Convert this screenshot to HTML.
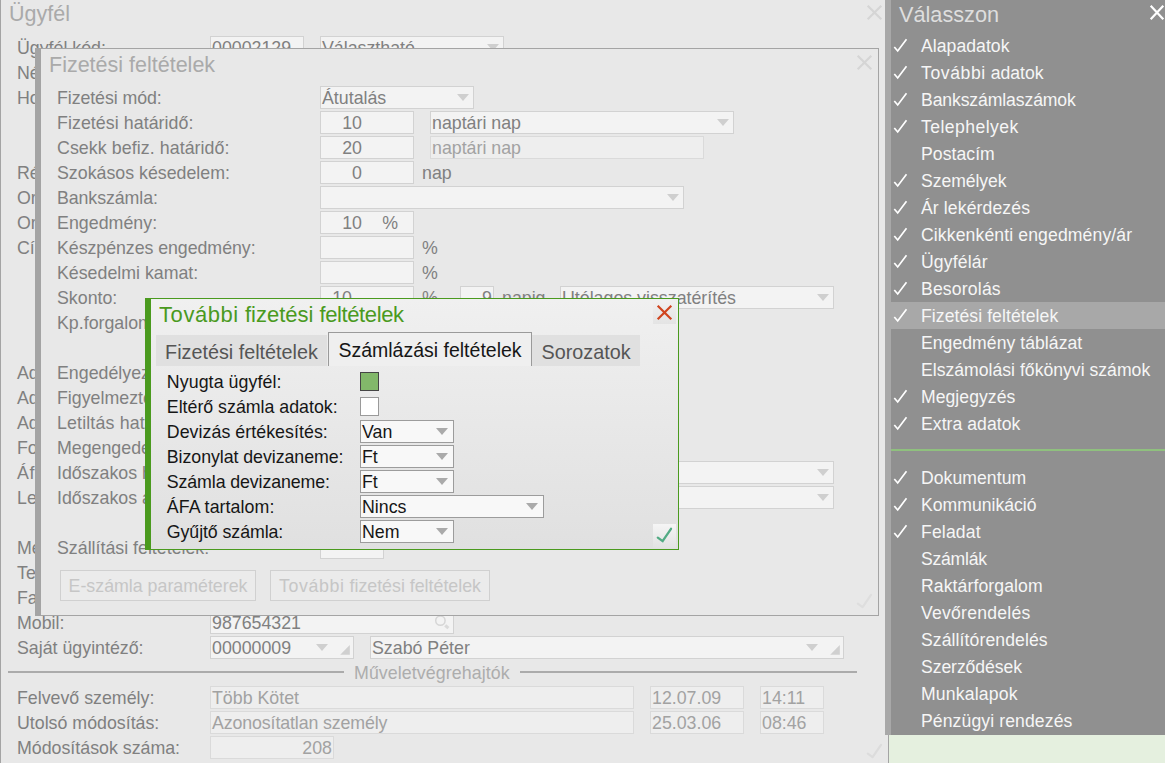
<!DOCTYPE html>
<html lang="hu"><head><meta charset="utf-8"><title>Ügyfél</title>
<style>
*{box-sizing:border-box;margin:0;padding:0}
html,body{width:1165px;height:763px;overflow:hidden}
body{position:relative;background:#e5f0df;font-family:"Liberation Sans",sans-serif;font-size:17.8px;line-height:23px;color:#808080}
.a{position:absolute;white-space:nowrap}
.l{position:absolute;white-space:nowrap;height:25px;line-height:25px}
.f{position:absolute;white-space:nowrap;height:23px;line-height:23px;border:1px solid #d2d2d2;background:#f3f3f3;padding-left:1px;overflow:hidden}
.r{background:#eeeeee;border-color:#dadada;color:#a2a2a2}
.c{padding-left:0}
.n{display:inline-block;width:41px;text-align:right}
.u{display:inline-block;width:36px;text-align:right}
.rt{text-align:right;padding-right:1px}
.ar{position:absolute;width:0;height:0;border-left:6px solid transparent;border-right:6px solid transparent;border-top:7px solid #cfcfcf}
.tri{position:absolute;width:9.6px;height:9.6px;background:#d0d0d0;clip-path:polygon(100% 0,100% 100%,0 100%)}
svg{position:absolute;overflow:visible}
#main{position:absolute;left:0;top:0;width:889px;height:763px;background:#e8e8e8;border-left:1px solid #a4a4a4;border-right:1px solid #a4a4a4;overflow:hidden}
#fiz{position:absolute;left:35px;top:48px;width:844px;height:568px;background:#e8e8e8;border:1px solid #a4a4a4;border-left:6px solid #a4a4a4;overflow:hidden}
#top{position:absolute;left:145px;top:298px;width:534px;height:252px;border:1px solid #4a9a1e;border-left:6px solid #4a9a1e;background:linear-gradient(#f0f0f0,#e0e0e0);color:#161616;overflow:hidden}
#top .f{background:#f8f8f8;border-color:#9c9c9c;color:#161616}
#top .ar{border-top-color:#aaaaaa}
#side{position:absolute;left:885px;top:0;width:280px;height:735px;background:#909090;border-left:6px solid #a8a8a8;color:#f6f6f6;overflow:hidden}
.btn{position:absolute;height:31px;line-height:31px;border:1px solid #d0d0d0;background:#ebebeb;color:#c6c6c6;text-align:center;font-size:17.8px;white-space:nowrap}
.tab{position:absolute;font-size:19.8px;white-space:nowrap;text-align:center}
.si{position:absolute;left:30px;height:27px;line-height:27px;white-space:nowrap;font-size:17.6px}
</style></head><body>
<div id="main">
<div class="a" style="left:8px;top:0px;font-size:21.5px;line-height:28px;color:#aaaaaa">Ügyfél</div>
<svg style="left:866px;top:5px" width="15" height="15" viewBox="0 0 15 15"><path d="M0.7 0.7L14.3 14.3M14.3 0.7L0.7 14.3" stroke="#d5d5d5" stroke-width="2.2" fill="none"/></svg>
<div class="l" style="left:16px;top:36px;">Ügyfél kód:</div>
<div class="l" style="left:16px;top:61px;">Név:</div>
<div class="l" style="left:16px;top:86px;">Hosszú név:</div>
<div class="l" style="left:16px;top:161px;">Régió:</div>
<div class="l" style="left:16px;top:186px;">Ország:</div>
<div class="l" style="left:16px;top:211px;">Országkód:</div>
<div class="l" style="left:16px;top:236px;">Cím:</div>
<div class="l" style="left:16px;top:361px;">Adószám:</div>
<div class="l" style="left:16px;top:386px;">Adószám EU:</div>
<div class="l" style="left:16px;top:411px;">Adóazonosító:</div>
<div class="l" style="left:16px;top:436px;">Forgalmazó:</div>
<div class="l" style="left:16px;top:461px;letter-spacing:0.6px">Áfa körzet:</div>
<div class="l" style="left:16px;top:486px;">Levelezés:</div>
<div class="l" style="left:16px;top:536px;">Megjegyzés:</div>
<div class="l" style="left:16px;top:561px;">Telefon:</div>
<div class="l" style="left:16px;top:586px;">Fax:</div>
<div class="l" style="left:16px;top:611px;">Mobil:</div>
<div class="l" style="left:16px;top:636px;">Saját ügyintéző:</div>
<div class="l" style="left:16px;top:686px;">Felvevő személy:</div>
<div class="l" style="left:16px;top:711px;">Utolsó módosítás:</div>
<div class="l" style="left:16px;top:736px;">Módosítások száma:</div>
<div class="f " style="left:209px;top:36px;width:94px;">00002129</div>
<div class="f " style="left:319px;top:36px;width:184px;">Választható</div>
<div class="ar" style="left:485.5px;top:44px;"></div>
<div class="f " style="left:209px;top:611px;width:244px;">987654321</div>
<svg style="left:429px;top:610px" width="24" height="24" viewBox="430 610 24 24"><circle cx="440.4" cy="620.6" r="4.7" stroke="#d6d6d6" stroke-width="1.5" fill="none"/><path d="M445.2 625.4L448.4 628.1" stroke="#dadada" stroke-width="3.2" fill="none"/></svg>
<div class="f " style="left:209px;top:636px;width:144px;">00000009</div>
<div class="ar" style="left:314.5px;top:644px;"></div>
<div class="tri" style="left:339.2px;top:645.1px"></div>
<div class="f " style="left:369px;top:636px;width:474px;">Szabó Péter</div>
<div class="ar" style="left:804.5px;top:644px;"></div>
<div class="tri" style="left:829.2px;top:645.1px"></div>
<div class="a" style="left:7px;top:671px;width:336px;height:2px;background:#ababab"></div>
<div class="a" style="left:519px;top:671px;width:337px;height:2px;background:#ababab"></div>
<div class="l" style="left:353px;top:661px;color:#adadad;letter-spacing:0.08px">Műveletvégrehajtók</div>
<div class="f r" style="left:209px;top:686px;width:424px;">Több Kötet</div>
<div class="f r" style="left:649px;top:686px;width:94px;">12.07.09</div>
<div class="f r" style="left:759px;top:686px;width:64px;">14:11</div>
<div class="f r" style="left:209px;top:711px;width:424px;letter-spacing:-0.12px">Azonosítatlan személy</div>
<div class="f r" style="left:649px;top:711px;width:94px;">25.03.06</div>
<div class="f r" style="left:759px;top:711px;width:64px;">08:46</div>
<div class="f r rt" style="left:209px;top:736px;width:124px;">208</div>
<svg style="left:866px;top:744px" width="15" height="15" viewBox="0 0 15 15"><path d="M0.8 9.6L5.6 13.2L14 0.8" stroke="#dcdcdc" stroke-width="2.2" stroke-linecap="round" stroke-linejoin="round" fill="none"/></svg>
</div>
<div id="fiz">
<div class="a" style="left:8px;top:1px;font-size:21.5px;line-height:30px;color:#aaaaaa">Fizetési feltételek</div>
<svg style="left:816px;top:6px" width="15" height="15" viewBox="0 0 15 15"><path d="M0.7 0.7L14.3 14.3M14.3 0.7L0.7 14.3" stroke="#d5d5d5" stroke-width="2.2" fill="none"/></svg>
<div class="l" style="left:16px;top:37px;letter-spacing:-0.083px">Fizetési mód:</div>
<div class="l" style="left:16px;top:62px;letter-spacing:0.059px">Fizetési határidő:</div>
<div class="l" style="left:16px;top:87px;letter-spacing:0.071px">Csekk befiz. határidő:</div>
<div class="l" style="left:16px;top:112px;letter-spacing:0.0px">Szokásos késedelem:</div>
<div class="l" style="left:16px;top:137px;letter-spacing:-0.09px">Bankszámla:</div>
<div class="l" style="left:16px;top:162px;letter-spacing:0.033px">Engedmény:</div>
<div class="l" style="left:16px;top:187px;letter-spacing:-0.055px">Készpénzes engedmény:</div>
<div class="l" style="left:16px;top:212px;letter-spacing:-0.007px">Késedelmi kamat:</div>
<div class="l" style="left:16px;top:237px;">Skonto:</div>
<div class="l" style="left:16px;top:262px;">Kp.forgalom limit:</div>
<div class="l" style="left:16px;top:312px;">Engedélyezett hitelkeret:</div>
<div class="l" style="left:16px;top:337px;">Figyelmeztetés hitelkeretnél:</div>
<div class="l" style="left:16px;top:362px;letter-spacing:0.15px">Letiltás határ:</div>
<div class="l" style="left:16px;top:387px;">Megengedett késedelem:</div>
<div class="l" style="left:16px;top:412px;">Időszakos hitelkeret:</div>
<div class="l" style="left:16px;top:437px;">Időszakos alap:</div>
<div class="l" style="left:16px;top:487px;">Szállítási feltételek:</div>
<div class="f " style="left:279px;top:37px;width:154px;">Átutalás</div>
<div class="ar" style="left:415.5px;top:45px;"></div>
<div class="f c" style="left:279px;top:62px;width:94px;"><span class="n">10</span></div>
<div class="f " style="left:389px;top:62px;width:304px;">naptári nap</div>
<div class="ar" style="left:675.5px;top:70px;"></div>
<div class="f c" style="left:279px;top:87px;width:94px;"><span class="n">20</span></div>
<div class="f r" style="left:389px;top:87px;width:274px;">naptári nap</div>
<div class="f c" style="left:279px;top:112px;width:94px;"><span class="n">0</span></div>
<div class="l" style="left:381px;top:112px;">nap</div>
<div class="f " style="left:279px;top:137px;width:364px;"></div>
<div class="ar" style="left:625.5px;top:145px;"></div>
<div class="f c" style="left:279px;top:162px;width:94px;"><span class="n">10</span><span class="u">%</span></div>
<div class="f " style="left:279px;top:187px;width:94px;"></div>
<div class="l" style="left:381px;top:187px;">%</div>
<div class="f " style="left:279px;top:212px;width:94px;"></div>
<div class="l" style="left:381px;top:212px;">%</div>
<div class="f c" style="left:279px;top:237px;width:94px;"><span class="n" style="width:31px">10</span></div>
<div class="l" style="left:381px;top:237px;">%</div>
<div class="f rt" style="left:419px;top:237px;width:34px;">9</div>
<div class="l" style="left:461px;top:237px;">napig</div>
<div class="f " style="left:519px;top:237px;width:274px;">Utólagos visszatérítés</div>
<div class="ar" style="left:775.5px;top:245px;"></div>
<div class="f " style="left:279px;top:262px;width:94px;"></div>
<div class="f " style="left:279px;top:312px;width:94px;"></div>
<div class="f " style="left:279px;top:337px;width:94px;"></div>
<div class="f " style="left:279px;top:362px;width:94px;"></div>
<div class="f " style="left:279px;top:387px;width:94px;"></div>
<div class="f " style="left:279px;top:412px;width:514px;"></div>
<div class="ar" style="left:775.5px;top:420px;"></div>
<div class="f " style="left:279px;top:437px;width:514px;"></div>
<div class="ar" style="left:775.5px;top:445px;"></div>
<div class="f " style="left:279px;top:487px;width:64px;"></div>
<div class="btn" style="left:19px;top:521px;width:196px">E-számla paraméterek</div>
<div class="btn" style="left:229px;top:521px;width:220px"><span style="letter-spacing:0.6px">További</span> fizetési feltételek</div>
<svg style="left:816px;top:545px" width="15" height="15" viewBox="0 0 15 15"><path d="M0.8 9.6L5.6 13.2L14 0.8" stroke="#dedede" stroke-width="2.2" stroke-linecap="round" stroke-linejoin="round" fill="none"/></svg>
</div>
<div id="top">
<div class="a" style="left:8px;top:1px;font-size:22px;line-height:30px;color:#4a9a1e"><span style="letter-spacing:0.57px">További</span> fizetési <span style="letter-spacing:-0.4px">feltételek</span></div>
<div class="a" style="left:502px;top:2px;width:23px;height:23px;background:linear-gradient(#f0f0f0,#e4e4e4)"></div>
<svg style="left:506px;top:6px" width="15" height="15" viewBox="0 0 15 15"><path d="M0.7 0.7L14.3 14.3M14.3 0.7L0.7 14.3" stroke="#d0451f" stroke-width="2.2" fill="none"/></svg>
<div class="tab" style="left:5px;top:36px;width:171px;height:31px;line-height:35px;background:#e0e0e0;color:#555555">Fizetési feltételek</div>
<div class="tab" style="left:381px;top:36px;width:108px;height:31px;line-height:35px;background:#e0e0e0;color:#555555">Sorozatok</div>
<div class="tab" style="left:177px;top:33px;width:204px;height:34px;line-height:34px;border:1px solid #9a9a9a;border-bottom:none;background:#efefef;color:#161616;font-size:19.5px">Számlázási feltételek</div>
<div class="l" style="left:15.800000000000011px;top:71px;letter-spacing:0.077px">Nyugta ügyfél:</div>
<div class="l" style="left:15.800000000000011px;top:96px;letter-spacing:-0.01px">Eltérő számla adatok:</div>
<div class="l" style="left:15.800000000000011px;top:121px;letter-spacing:0.047px">Devizás értékesítés:</div>
<div class="l" style="left:15.800000000000011px;top:146px;letter-spacing:-0.06px">Bizonylat devizaneme:</div>
<div class="l" style="left:15.800000000000011px;top:171px;letter-spacing:-0.112px">Számla devizaneme:</div>
<div class="l" style="left:15.800000000000011px;top:196px;letter-spacing:0.067px">ÁFA tartalom:</div>
<div class="l" style="left:15.800000000000011px;top:221px;letter-spacing:-0.085px">Gyűjtő számla:</div>
<div class="a" style="left:209px;top:73px;width:19px;height:19px;background:#82b86a;border:1px solid #454545"></div>
<div class="a" style="left:209px;top:98px;width:19px;height:19px;background:#ffffff;border:1px solid #9a9a9a"></div>
<div class="f " style="left:209px;top:121px;width:94px;">Van</div>
<div class="ar" style="left:285px;top:129px;"></div>
<div class="f " style="left:209px;top:146px;width:94px;">Ft</div>
<div class="ar" style="left:285px;top:154px;"></div>
<div class="f " style="left:209px;top:171px;width:94px;">Ft</div>
<div class="ar" style="left:285px;top:179px;"></div>
<div class="f " style="left:209px;top:196px;width:184px;">Nincs</div>
<div class="ar" style="left:375px;top:204px;"></div>
<div class="f " style="left:209px;top:221px;width:94px;">Nem</div>
<div class="ar" style="left:285px;top:229px;"></div>
<div class="a" style="left:502px;top:225px;width:23px;height:24px;background:linear-gradient(#f5f5f5,#e2e2e2)"></div>
<svg style="left:506px;top:229px" width="15" height="15" viewBox="0 0 15 15"><path d="M0.8 9.6L5.6 13.2L14 0.8" stroke="#52ab84" stroke-width="2.3" stroke-linecap="round" stroke-linejoin="round" fill="none"/></svg>
</div>
<div id="side">
<div class="a" style="left:8px;top:1px;font-size:21.7px;line-height:28px;color:#dedede">Válasszon</div>
<svg style="left:259px;top:5px" width="14" height="15" viewBox="0 0 14 15"><path d="M0.7 0.7L13.3 14.3M13.3 0.7L0.7 14.3" stroke="#ffffff" stroke-width="2.2" fill="none"/></svg>
<div class="a" style="left:-6px;top:302px;width:286px;height:27px;background:#a8a8a8"></div>
<div class="si" style="top:33px;letter-spacing:0.044px">Alapadatok</div>
<svg style="left:0px;top:33px" width="20" height="27" viewBox="0 0 20 27"><path d="M3.3 14L6.7 18L15.5 6.2" stroke="#ffffff" stroke-width="1.7" fill="none"/></svg>
<div class="si" style="top:60px"><span style="letter-spacing:0.6px">További</span> adatok</div>
<svg style="left:0px;top:60px" width="20" height="27" viewBox="0 0 20 27"><path d="M3.3 14L6.7 18L15.5 6.2" stroke="#ffffff" stroke-width="1.7" fill="none"/></svg>
<div class="si" style="top:87px;letter-spacing:-0.107px">Bankszámlaszámok</div>
<svg style="left:0px;top:87px" width="20" height="27" viewBox="0 0 20 27"><path d="M3.3 14L6.7 18L15.5 6.2" stroke="#ffffff" stroke-width="1.7" fill="none"/></svg>
<div class="si" style="top:114px;letter-spacing:0.44px">Telephelyek</div>
<svg style="left:0px;top:114px" width="20" height="27" viewBox="0 0 20 27"><path d="M3.3 14L6.7 18L15.5 6.2" stroke="#ffffff" stroke-width="1.7" fill="none"/></svg>
<div class="si" style="top:141px;letter-spacing:0.057px">Postacím</div>
<div class="si" style="top:168px;letter-spacing:-0.05px">Személyek</div>
<svg style="left:0px;top:168px" width="20" height="27" viewBox="0 0 20 27"><path d="M3.3 14L6.7 18L15.5 6.2" stroke="#ffffff" stroke-width="1.7" fill="none"/></svg>
<div class="si" style="top:195px;letter-spacing:0.117px">Ár lekérdezés</div>
<svg style="left:0px;top:195px" width="20" height="27" viewBox="0 0 20 27"><path d="M3.3 14L6.7 18L15.5 6.2" stroke="#ffffff" stroke-width="1.7" fill="none"/></svg>
<div class="si" style="top:222px;letter-spacing:0.122px">Cikkenkénti engedmény/ár</div>
<svg style="left:0px;top:222px" width="20" height="27" viewBox="0 0 20 27"><path d="M3.3 14L6.7 18L15.5 6.2" stroke="#ffffff" stroke-width="1.7" fill="none"/></svg>
<div class="si" style="top:249px;letter-spacing:0.143px">Ügyfélár</div>
<svg style="left:0px;top:249px" width="20" height="27" viewBox="0 0 20 27"><path d="M3.3 14L6.7 18L15.5 6.2" stroke="#ffffff" stroke-width="1.7" fill="none"/></svg>
<div class="si" style="top:276px;letter-spacing:0.175px">Besorolás</div>
<svg style="left:0px;top:276px" width="20" height="27" viewBox="0 0 20 27"><path d="M3.3 14L6.7 18L15.5 6.2" stroke="#ffffff" stroke-width="1.7" fill="none"/></svg>
<div class="si" style="top:303px;letter-spacing:0.072px">Fizetési feltételek</div>
<svg style="left:0px;top:303px" width="20" height="27" viewBox="0 0 20 27"><path d="M3.3 14L6.7 18L15.5 6.2" stroke="#ffffff" stroke-width="1.7" fill="none"/></svg>
<div class="si" style="top:330px;letter-spacing:0.047px">Engedmény táblázat</div>
<div class="si" style="top:357px;letter-spacing:0.015px">Elszámolási főkönyvi számok</div>
<div class="si" style="top:384px;letter-spacing:0.044px">Megjegyzés</div>
<svg style="left:0px;top:384px" width="20" height="27" viewBox="0 0 20 27"><path d="M3.3 14L6.7 18L15.5 6.2" stroke="#ffffff" stroke-width="1.7" fill="none"/></svg>
<div class="si" style="top:411px;letter-spacing:0.055px">Extra adatok</div>
<svg style="left:0px;top:411px" width="20" height="27" viewBox="0 0 20 27"><path d="M3.3 14L6.7 18L15.5 6.2" stroke="#ffffff" stroke-width="1.7" fill="none"/></svg>
<div class="a" style="left:0;top:449px;width:274px;height:2px;background:#8fc07e"></div>
<div class="si" style="top:465px;letter-spacing:0.056px">Dokumentum</div>
<svg style="left:0px;top:465px" width="20" height="27" viewBox="0 0 20 27"><path d="M3.3 14L6.7 18L15.5 6.2" stroke="#ffffff" stroke-width="1.7" fill="none"/></svg>
<div class="si" style="top:492px;letter-spacing:0.018px">Kommunikáció</div>
<svg style="left:0px;top:492px" width="20" height="27" viewBox="0 0 20 27"><path d="M3.3 14L6.7 18L15.5 6.2" stroke="#ffffff" stroke-width="1.7" fill="none"/></svg>
<div class="si" style="top:519px;letter-spacing:0.15px">Feladat</div>
<svg style="left:0px;top:519px" width="20" height="27" viewBox="0 0 20 27"><path d="M3.3 14L6.7 18L15.5 6.2" stroke="#ffffff" stroke-width="1.7" fill="none"/></svg>
<div class="si" style="top:546px;letter-spacing:-0.25px">Számlák</div>
<div class="si" style="top:573px;letter-spacing:0.1px">Raktárforgalom</div>
<div class="si" style="top:600px;letter-spacing:0.236px">Vevőrendelés</div>
<div class="si" style="top:627px;letter-spacing:0.093px">Szállítórendelés</div>
<div class="si" style="top:654px;letter-spacing:-0.07px">Szerződések</div>
<div class="si" style="top:681px;letter-spacing:0.178px">Munkalapok</div>
<div class="si" style="top:708px;letter-spacing:0.106px">Pénzügyi rendezés</div>
</div>
</body></html>
